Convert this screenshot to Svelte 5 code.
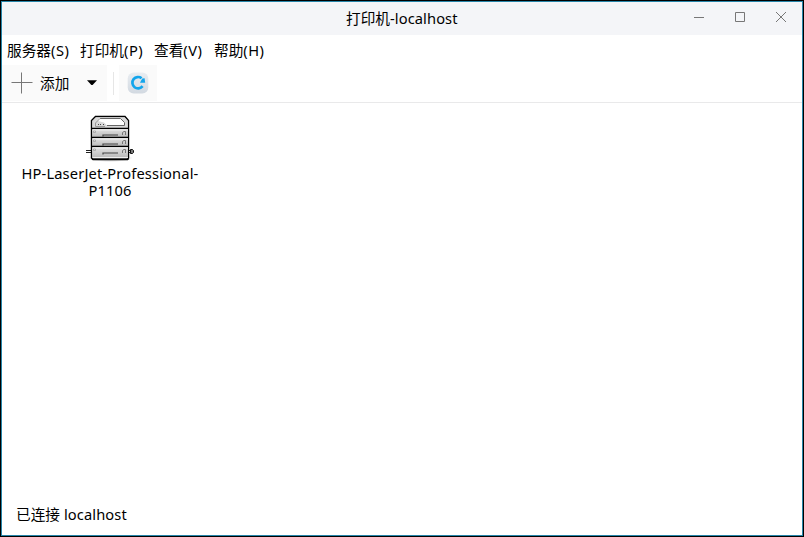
<script>
  const menus = [
    { cjk: '服务器', key: '(S)', width: 73 },
    { cjk: '打印机', key: '(P)', width: 74 },
    { cjk: '查看', key: '(V)', width: 60 },
    { cjk: '帮助', key: '(H)', width: 60 }
  ];
  const shelves = [21, 30, 39];
</script>

<div class="window">
  <header>
    <h1><span>打印机</span><span class="host">-localhost</span></h1>
    <div class="controls">
      <svg width="12" height="12" viewBox="0 0 12 12"><path d="M1 8.5H11" /></svg>
      <svg width="12" height="12" viewBox="0 0 12 12"><path d="M1.5 3.5H10.5V12.5H1.5Z" /></svg>
      <svg width="12" height="12" viewBox="0 0 12 12"><path d="M1 3L11 13M11 3L1 13" /></svg>
    </div>
  </header>

  <nav>
    {#each menus as m}
      <span class="menu" style="width: {m.width}px">{m.cjk}<span class="key">{m.key}</span></span>
    {/each}
  </nav>

  <div class="toolbar">
    <div class="add">
      <svg class="plus" width="22" height="22" viewBox="0 0 22 22"><path d="M0.5 10.5H21.5M10.5 0.5V21.5" /></svg>
      <span class="label">添加</span>
      <svg width="10" height="6" viewBox="0 0 10 6"><path d="M0 0.3H10L5.6 5H4.4Z" fill="#000" /></svg>
    </div>
    <div class="divider"></div>
    <div class="refresh">
      <svg width="22" height="22" viewBox="0 0 22 22">
        <defs>
          <linearGradient id="tile" x1="0" y1="0" x2="0" y2="1">
            <stop offset="0" stop-color="#e9edf1" /><stop offset="1" stop-color="#d2d9e1" />
          </linearGradient>
        </defs>
        <rect x="0.7" y="0.5" width="20.6" height="21" rx="6" fill="url(#tile)" />
        <path d="M14.6 6.2A5.7 5.7 0 1 0 15.6 14.2" fill="none" stroke="#12a5ec" stroke-width="2.7" />
        <path d="M17.6 6.2L18.2 10.8H13L14 8.8L15.4 6.5Z" fill="#12a5ec" />
      </svg>
    </div>
  </div>

  <main>
    <div class="printer">
      <svg width="60" height="54" viewBox="0 0 60 54">
        <defs>
          <linearGradient id="metal" x1="0" y1="0" x2="0" y2="1">
            <stop offset="0" stop-color="#e2e2e2" /><stop offset="1" stop-color="#bcbcbc" />
          </linearGradient>
          <radialGradient id="shadow">
            <stop offset="0" stop-color="#555" stop-opacity=".8" /><stop offset="1" stop-color="#888" stop-opacity="0" />
          </radialGradient>
        </defs>
        <ellipse cx="30" cy="50" rx="23" ry="4" fill="url(#shadow)" />
        <path d="M6 42.5H12M6 44.5H12M49 42.5H51M49 44.5H51" stroke="#222" />
        <path d="M50.5 41.5H52.5L53.5 42.5V44.5L52.5 45.5H50.5Z" fill="#777" stroke="#111" />
        <path d="M15.5 8.5H45L48.5 12.5V50L47.5 51.5H13L11.5 50V12.5Z" fill="#c7c7c7" stroke="#000" stroke-width="1.4" />
        <path d="M16 9.3H44.5L47.8 13V20H12.3V13Z" fill="#d9d9d9" />
        <path d="M19.5 10.5H41L44.5 14.5V17.5H27L24 14.5L18 13Z" fill="#fff" />
        <path d="M20 10.5H40.5L44.5 14.5V17.5H27" fill="none" stroke="#666" />
        <path d="M20 10.5L15.5 15V18.5H25" fill="none" stroke="#999" />
        <path d="M18 16.5H19M20 16.5H21M23 16.5H24" stroke="#444" />
        {#each shelves as y, i}
          <rect x="12.2" y={y} width="35.7" height={i === 2 ? 10 : 8} fill="url(#metal)" />
          <path d="M11.5 {y - 0.5}H48.5" stroke="#000" stroke-width="1.5" />
          <path d="M12.5 {y + 0.8}H48" stroke="#fafafa" />
          <path d="M13.5 {y + 2}h2v1.5h-2z" fill="#eee" stroke="#999" stroke-width=".7" />
          <path d="M23 {y + 7.5}V{y + 6}H38" fill="none" stroke="#444" stroke-width="1.2" />
          <path d="M42.5 {y + 6}V{y + 3.5}L44 {y + 2.5}H45.5V{y + 6}" fill="none" stroke="#777" />
        {/each}
        <path d="M12.5 49.5H48" stroke="#eee" />
        <path d="M12 51.2H48.5" stroke="#000" stroke-width="1.5" />
      </svg>
      <div class="name">HP-LaserJet-Professional-<wbr />P1106</div>
    </div>
  </main>

  <footer><span>已连接</span><span class="host">localhost</span></footer>
</div>

<style>
  :global(body) { margin: 0; background: #000; }
  .window {
    box-sizing: border-box;
    width: 802px;
    height: 535px;
    margin: 1px;
    border: 1px solid #2685a9;
    background: #fff;
    display: flex;
    flex-direction: column;
    overflow: hidden;
    color: #000;
    font: 14.67px/20px "Noto Sans", "Noto Sans CJK SC", sans-serif;
    white-space: nowrap;
  }
  :global(#app) { display: flow-root; }
  header { display: flex; height: 33px; background: #f4f5f8; flex: none; }
  h1 { flex: none; margin: 6px 0 0 344px; width: 120px; font-size: 14.67px; font-weight: 400; line-height: 20px; }
  .host { letter-spacing: 0.1px; }
  .controls { display: flex; gap: 29px; margin: 7px 0 0 227px; height: 14px; }
  .controls svg, .plus { fill: none; stroke: #777; stroke-width: 1; overflow: visible; }
  nav { display: flex; flex: none; height: 30px; padding: 5px 0 0 5px; box-sizing: border-box; }
  .menu { flex: none; }
  .key { letter-spacing: 0.5px; }
  .toolbar { display: flex; flex: none; height: 38px; box-sizing: border-box; border-bottom: 1px solid #e9e9ea; }
  .add { display: flex; align-items: center; width: 105px; height: 36px; background: #fafafa; }
  .plus { margin: -1px 0 0 9px; }
  .label { width: 47px; margin-left: 7px; }
  .divider { width: 1px; height: 23px; margin: 7px 5px 0 6px; background: #e6e6e6; }
  .refresh { display: flex; align-items: center; justify-content: center; width: 38px; height: 36px; background: #fafafa; }
  main { flex: 1; padding: 5px 0 0 8px; }
  .printer { width: 200px; display: flex; flex-direction: column; align-items: center; }
  .printer svg { flex: none; }
  .name { width: 190px; white-space: normal; text-align: center; line-height: 17px; margin-top: 3px; letter-spacing: 0.15px; }
  footer { display: flex; gap: 4px; flex: none; height: 31px; padding-left: 14px; }
</style>
